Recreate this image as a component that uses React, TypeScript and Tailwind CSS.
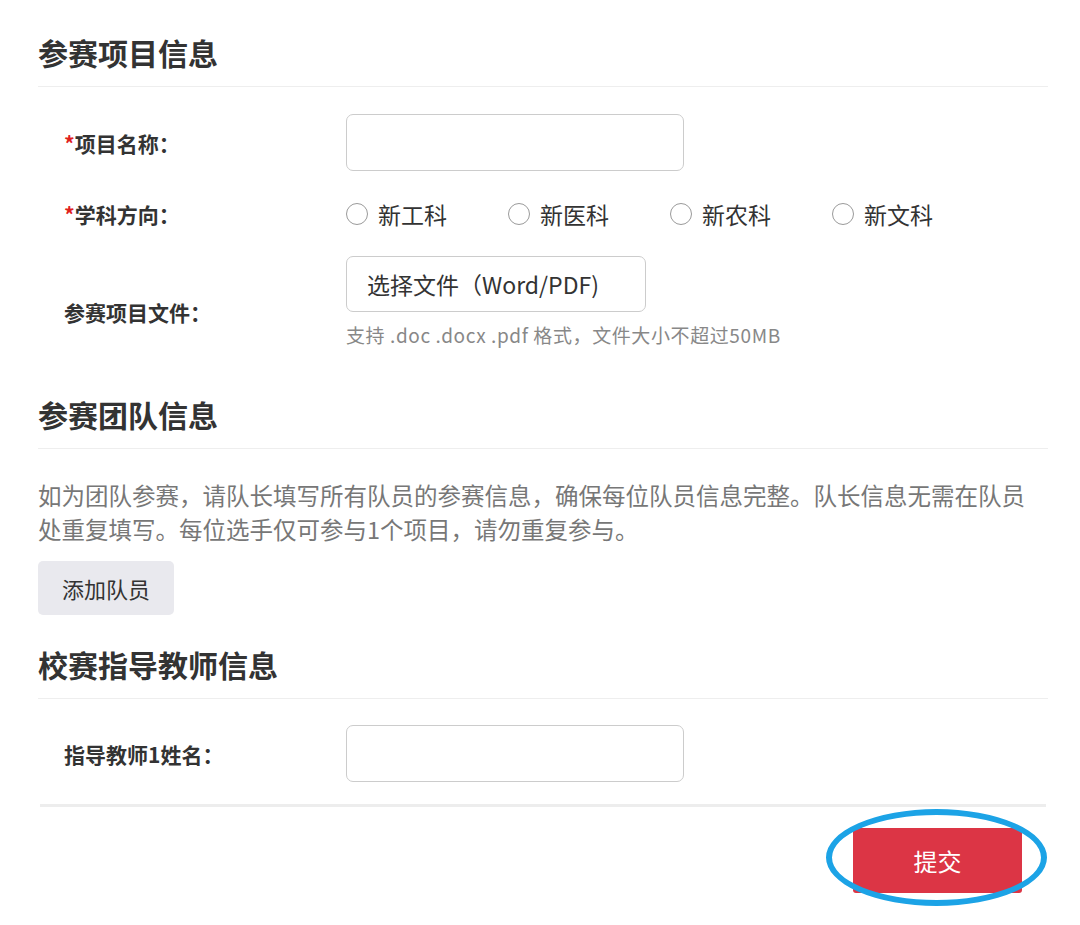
export default function App() {
  const fields = ["新工科", "新医科", "新农科", "新文科"]

  return (
    <div
      className="min-h-[925px] bg-white px-[38px] pt-[32px] text-[#333]"
      style={{ fontFamily: '"Noto Sans CJK SC", "Noto Sans", sans-serif' }}
    >
      <div className="w-[1010px]">
        {/* 参赛项目信息 */}
        <h2 className="h-[40px] text-[30px] font-bold leading-[40px] text-[#333]">参赛项目信息</h2>
        <div className="mt-[14px] border-b border-[#eeeeee]" />

        <div className="pl-[26px]">
          <div className="mt-[27px] flex items-center">
            <label className="w-[282px] text-[21px] font-bold leading-[26px]">
              <span className="text-[#e0201e]">*</span>项目名称：
            </label>
            <input
              type="text"
              className="h-[57px] w-[338px] rounded-[7px] border border-[#cccccc] bg-white px-3 text-[22px] outline-none"
            />
          </div>

          <div className="mt-[27px] flex h-[32px] items-center">
            <label className="w-[282px] text-[21px] font-bold leading-[26px]">
              <span className="text-[#e0201e]">*</span>学科方向：
            </label>
            <div className="flex items-center">
              {fields.map((f) => (
                <label key={f} className="flex w-[162px] items-center gap-[10px]">
                  <span className="h-[22px] w-[22px] rounded-full border border-[#9a9a9a] bg-white" />
                  <span className="text-[23px] leading-[30px] text-[#333]">{f}</span>
                </label>
              ))}
            </div>
          </div>

          <div className="mt-[26px] flex items-start">
            <label className="mt-[43px] w-[282px] text-[21px] font-bold leading-[26px]">参赛项目文件：</label>
            <div>
              <button className="flex h-[56px] w-[300px] items-center rounded-[7px] border border-[#cccccc] bg-white pl-[20px] text-[23px] text-[#333]">
                选择文件（Word/PDF)
              </button>
              <p className="mt-[11px] text-[19px] leading-[24px] tracking-[0.6px] text-[#888]">
                支持 .doc .docx .pdf 格式，文件大小不超过50MB
              </p>
            </div>
          </div>
        </div>

        {/* 参赛团队信息 */}
        <h2 className="mt-[47px] h-[40px] text-[30px] font-bold leading-[40px] text-[#333]">参赛团队信息</h2>
        <div className="mt-[14px] border-b border-[#eeeeee]" />
        <p className="mt-[29px] max-w-[1000px] text-[23.5px] leading-[34px] text-[#777]">
          如为团队参赛，请队长填写所有队员的参赛信息，确保每位队员信息完整。队长信息无需在队员处重复填写。每位选手仅可参与1个项目，请勿重复参与。
        </p>
        <button className="mt-[15px] h-[54px] w-[136px] rounded-[5px] bg-[#e9e9ee] text-[22px] text-[#333]">
          添加队员
        </button>

        {/* 校赛指导教师信息 */}
        <h2 className="mt-[29px] h-[40px] text-[30px] font-bold leading-[40px] text-[#333]">校赛指导教师信息</h2>
        <div className="mt-[14px] border-b border-[#eeeeee]" />
        <div className="mx-[2px] border-b-[3px] border-[#ededed] pb-[22px] pl-[24px]">
          <div className="mt-[26px] flex items-center">
            <label className="w-[282px] text-[21px] font-bold leading-[26px]">指导教师1姓名：</label>
            <input
              type="text"
              className="h-[57px] w-[338px] rounded-[7px] border border-[#cccccc] bg-white px-3 text-[22px] outline-none"
            />
          </div>
        </div>

        <div className="mt-[21px] flex justify-end pr-[26px]">
          <div className="relative">
            <button className="h-[65px] w-[169px] rounded-[3px] bg-[#dc3545] text-[24px] text-white">提交</button>
            <div className="pointer-events-none absolute left-[-27px] top-[-19px] h-[97px] w-[221px] rounded-[50%] border-[6px] border-[#1ca3e6]" />
          </div>
        </div>
      </div>
    </div>
  )
}
